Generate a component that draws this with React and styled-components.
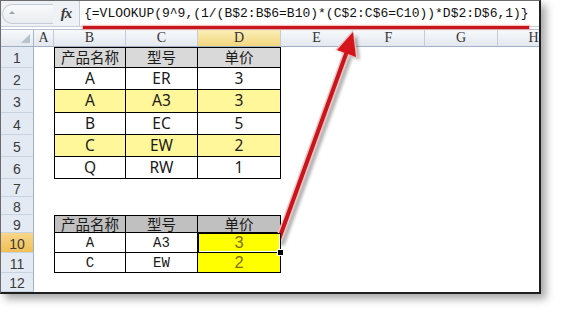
import React from 'react';
import styled, { createGlobalStyle } from 'styled-components';

const GlobalStyle = createGlobalStyle`
  html, body {
    margin: 0;
    padding: 0;
    background: #fff;
  }
  body {
    width: 562px;
    height: 314px;
    overflow: hidden;
  }
`;

const COL_WIDTHS = [33, 20, 72, 72, 83, 72, 72, 73, 72];
const ROW_HEIGHTS = [17, 21, 22, 23, 22, 22, 22, 18, 18, 18, 20, 20, 19];
const COLS = ['A', 'B', 'C', 'D', 'E', 'F', 'G', 'H'];

const FORMULA = '{=VLOOKUP(9^9,(1/(B$2:B$6=B10)*(C$2:C$6=C10))*D$2:D$6,1)}';

// row number -> cell contents and look
const ROWS = [
  { n: 1, table: 1, head: true, cells: ['产品名称', '型号', '单价'] },
  { n: 2, table: 1, cells: ['A', 'ER', '3'] },
  { n: 3, table: 1, yellow: true, cells: ['A', 'A3', '3'] },
  { n: 4, table: 1, cells: ['B', 'EC', '5'] },
  { n: 5, table: 1, yellow: true, cells: ['C', 'EW', '2'] },
  { n: 6, table: 1, cells: ['Q', 'RW', '1'] },
  { n: 7 },
  { n: 8 },
  { n: 9, table: 2, head: true, cells: ['产品名称', '型号', '单价'] },
  { n: 10, table: 2, active: true, cells: ['A', 'A3', '3'] },
  { n: 11, table: 2, cells: ['C', 'EW', '2'] },
  { n: 12 },
];

export default function App() {
  return (
    <>
      <GlobalStyle />
      <Page>
        <Frame>
          <FormulaArea>
            <FormulaBar>
              <NameBox>
                <Caret />
              </NameBox>
              <FxLabel>fx</FxLabel>
              <FormulaInput>{FORMULA}</FormulaInput>
            </FormulaBar>
          </FormulaArea>

          <Sheet>
            <Corner />
            {COLS.map((c) => (
              <ColHead key={c} $active={c === 'D'}>{c}</ColHead>
            ))}

            {ROWS.map((row) => (
              <React.Fragment key={row.n}>
                <RowHead $active={row.active}>{row.n}</RowHead>
                <Blank />
                {row.table ? (
                  row.cells.map((text, i) => {
                    const isPrice = i === 2;
                    if (row.head) {
                      return (
                        <TableCell key={i} $first={i === 0} $top $bg={row.table === 1 ? '#d9d9d9' : '#c0c0c0'}>
                          <HeadText>{text}</HeadText>
                        </TableCell>
                      );
                    }
                    if (row.table === 2 && isPrice) {
                      return (
                        <TableCell key={i} $bg="#ffff00" $selected={row.active}>
                          <PriceText>{text}</PriceText>
                          {row.active && <FillHandle />}
                        </TableCell>
                      );
                    }
                    return (
                      <TableCell key={i} $first={i === 0} $bg={row.yellow ? '#fff799' : '#fff'}>
                        {row.table === 1 ? <BodyText>{text}</BodyText> : <MonoText>{text}</MonoText>}
                      </TableCell>
                    );
                  })
                ) : (
                  <>
                    <Blank />
                    <Blank />
                    <Blank />
                  </>
                )}
                <Blank />
                <Blank />
                <Blank />
                <Blank />
              </React.Fragment>
            ))}
          </Sheet>

          <Underline />

          <Arrow viewBox="0 0 562 314" width="562" height="314">
            <defs>
              <filter id="soft" x="-20%" y="-20%" width="140%" height="140%">
                <feGaussianBlur stdDeviation="1.6" />
              </filter>
            </defs>
            <g transform="translate(4 3)" filter="url(#soft)" opacity="0.45">
              <line x1="278" y1="242" x2="346" y2="54" stroke="#555" strokeWidth="5" />
              <polygon points="353,32 356,57 337,50" fill="#555" />
            </g>
            <line x1="278" y1="242" x2="346" y2="54" stroke="#f6c2c2" strokeWidth="7" strokeLinecap="round" />
            <polygon points="353,30 358,58 335,50" fill="#f6c2c2" />
            <line x1="278" y1="242" x2="346" y2="54" stroke="#c8161d" strokeWidth="4" strokeLinecap="round" />
            <polygon points="353,32 356,57 337,50" fill="#d4151c" />
          </Arrow>
        </Frame>
      </Page>
    </>
  );
}

const Page = styled.div`
  width: 562px;
  height: 314px;
  background: #fff;
`;

const Frame = styled.div`
  position: relative;
  box-sizing: border-box;
  width: 541px;
  height: 294px;
  border-top: 1px solid #6b6b6b;
  border-left: 1px solid #6b6b6b;
  border-right: 2px solid #1e1e1e;
  border-bottom: 2px solid #1e1e1e;
  background: #fff;
  box-shadow: 5px 5px 8px rgba(0, 0, 0, 0.35);
  display: flex;
  flex-direction: column;
  overflow: hidden;
`;

const FormulaArea = styled.div`
  height: 29px;
  box-sizing: border-box;
  padding-bottom: 3px;
  background: #fff;
  border-bottom: 1px solid #b7c3d2;
`;

const FormulaBar = styled.div`
  display: flex;
  align-items: stretch;
  height: 25px;
  background: #eef1f5;
  border-bottom: 1px solid #c5ccd6;
`;

const NameBox = styled.div`
  position: relative;
  width: 50px;
  margin: 3px 0 2px 1px;
  border: 1px solid #c6ccd5;
  border-right: none;
  border-radius: 11px 0 0 11px;
  background: linear-gradient(#f9fafb, #e9ecf0);
`;

const Caret = styled.span`
  position: absolute;
  left: 6px;
  top: 6px;
  width: 0;
  height: 0;
  border-left: 3px solid transparent;
  border-right: 3px solid transparent;
  border-bottom: 3px solid #9aa3ae;
`;

const FxLabel = styled.div`
  width: 26px;
  display: flex;
  align-items: center;
  justify-content: center;
  font-family: 'Liberation Serif', serif;
  font-style: italic;
  font-weight: bold;
  font-size: 15px;
  color: #3a3a3a;
  letter-spacing: -1px;
`;

const FormulaInput = styled.div`
  flex: 1;
  background: #fff;
  border-left: 1px solid #c5ccd6;
  padding-left: 4px;
  font-family: 'Liberation Mono', monospace;
  font-size: 13px;
  line-height: 25px;
  color: #111;
  white-space: nowrap;
`;

const Underline = styled.div`
  position: absolute;
  left: 82px;
  top: 25px;
  width: 446px;
  height: 3px;
  background: #c8161d;
  box-shadow: 0 0 1px 1px rgba(240, 150, 150, 0.6);
`;

const Arrow = styled.svg`
  position: absolute;
  left: -1px;
  top: -1px;
  pointer-events: none;
`;

const Sheet = styled.div`
  display: grid;
  grid-template-columns: ${COL_WIDTHS.map((w) => `${w}px`).join(' ')};
  grid-template-rows: ${ROW_HEIGHTS.map((h) => `${h}px`).join(' ')};
  flex: 1;
  overflow: hidden;
`;

const headFont = `
  font-family: 'Liberation Serif', serif;
  font-size: 14px;
  color: #333;
`;

const Corner = styled.div`
  position: relative;
  box-sizing: border-box;
  background: linear-gradient(#f7f9fb, #e3e8ef);
  border-right: 1px solid #a9b7c8;
  border-bottom: 1px solid #9fb1c6;

  &::after {
    content: '';
    position: absolute;
    right: 3px;
    bottom: 3px;
    border-left: 9px solid transparent;
    border-bottom: 9px solid #b7c1cc;
  }
`;

const ColHead = styled.div`
  box-sizing: border-box;
  display: flex;
  align-items: center;
  justify-content: center;
  background: ${(p) => (p.$active ? 'linear-gradient(#fbeeb8, #f3d77e)' : 'linear-gradient(#f7f9fb, #e3e8ef)')};
  border-right: 1px solid #c3ccd8;
  border-bottom: 1px solid #9fb1c6;
  ${headFont}
`;

const RowHead = styled.div`
  box-sizing: border-box;
  display: flex;
  align-items: center;
  justify-content: center;
  padding-top: 2px;
  background: ${(p) => (p.$active ? 'linear-gradient(#f9d68a, #f1bf55)' : '#e3eaf3')};
  border-right: 1px solid #9fb1c6;
  border-bottom: 1px solid #c8d3e1;
  font-family: 'Liberation Sans', sans-serif;
  font-size: 14px;
  line-height: 1;
  color: #3a3a3a;
`;

const Blank = styled.div`
  background: #fff;
`;

const TableCell = styled.div`
  position: relative;
  box-sizing: border-box;
  display: flex;
  align-items: center;
  justify-content: center;
  line-height: 1;
  background: ${(p) => p.$bg};
  border-right: 1px solid #000;
  border-bottom: 1px solid #000;
  border-left: ${(p) => (p.$first ? '1px solid #000' : 'none')};
  border-top: ${(p) => (p.$top ? '1px solid #000' : 'none')};
  box-shadow: ${(p) => (p.$selected ? 'inset 1px 1px 0 #000, inset 0 0 0 1px #fff' : 'none')};
  z-index: ${(p) => (p.$selected ? 1 : 0)};
`;

const HeadText = styled.span`
  font-family: 'Noto Sans CJK SC', sans-serif;
  font-size: 14.5px;
  line-height: 1;
  color: #1a1a1a;
`;

const BodyText = styled.span`
  font-family: 'Noto Sans', 'Noto Sans CJK SC', sans-serif;
  font-size: 15.5px;
  line-height: 1;
  color: #1a1a1a;
`;

const MonoText = styled.span`
  font-family: 'Liberation Mono', monospace;
  font-size: 14px;
  line-height: 1;
  color: #1a1a1a;
`;

const PriceText = styled.span`
  font-family: 'Liberation Sans', sans-serif;
  font-size: 16.5px;
  line-height: 1;
  color: #7d6d05;
`;

const FillHandle = styled.span`
  position: absolute;
  right: -4px;
  bottom: -4px;
  width: 5px;
  height: 5px;
  background: #000;
  border: 1px solid #fff;
  z-index: 2;
`;
